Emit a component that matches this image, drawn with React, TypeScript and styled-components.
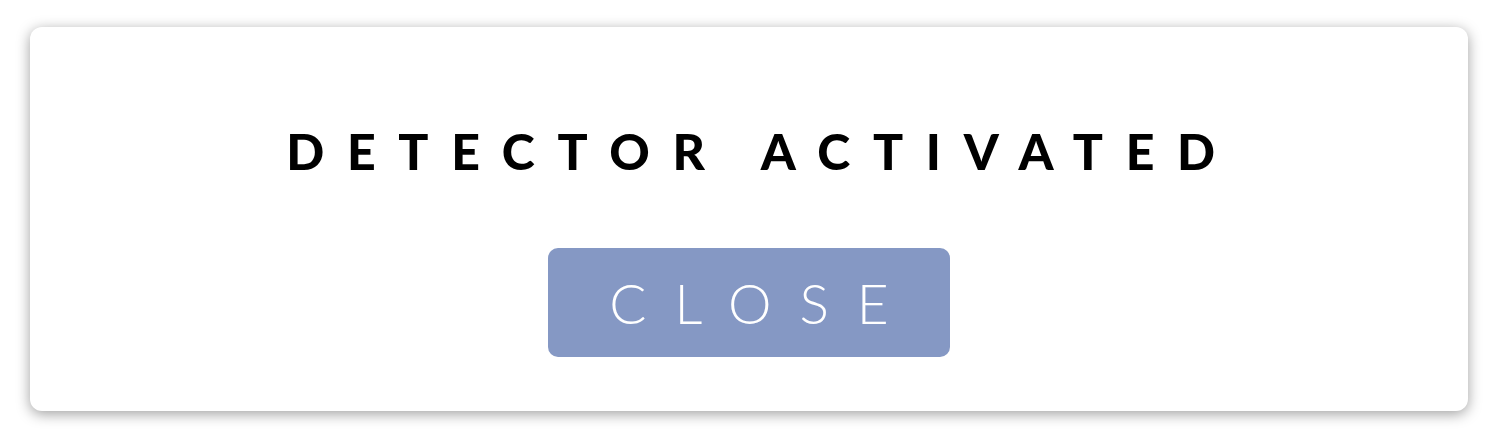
import React from "react"
import styled, { createGlobalStyle } from "styled-components"

const GlobalStyle = createGlobalStyle`
  html, body {
    margin: 0;
    padding: 0;
    background: #ffffff;
  }
  body {
    font-family: "Lato", "Liberation Sans", sans-serif;
  }
`

const Page = styled.div`
  padding: 27px 32px 29px 30px;
`

const Card = styled.div`
  height: 384px;
  box-sizing: border-box;
  background: #ffffff;
  border-radius: 12px;
  box-shadow: 0 3px 14px rgba(0, 0, 0, 0.38);
  display: flex;
  flex-direction: column;
  align-items: center;
  padding-top: 94px;
`

const Title = styled.h1`
  margin: 0;
  font-size: 50px;
  font-weight: 900;
  line-height: 60px;
  letter-spacing: 22.7px;
  padding-left: 26px;
  color: #000000;
`

const CloseButton = styled.button`
  margin-top: 67px;
  width: 402px;
  height: 109px;
  border: none;
  border-radius: 10px;
  background: #8598c4;
  color: #ffffff;
  font-family: "Lato", "Liberation Sans", sans-serif;
  font-size: 55px;
  font-weight: 300;
  letter-spacing: 28px;
  padding: 0 0 0 28px;
  cursor: pointer;
`

export default function App() {
  return (
    <>
      <GlobalStyle />
      <Page>
        <Card>
          <Title>DETECTOR ACTIVATED</Title>
          <CloseButton>CLOSE</CloseButton>
        </Card>
      </Page>
    </>
  )
}
